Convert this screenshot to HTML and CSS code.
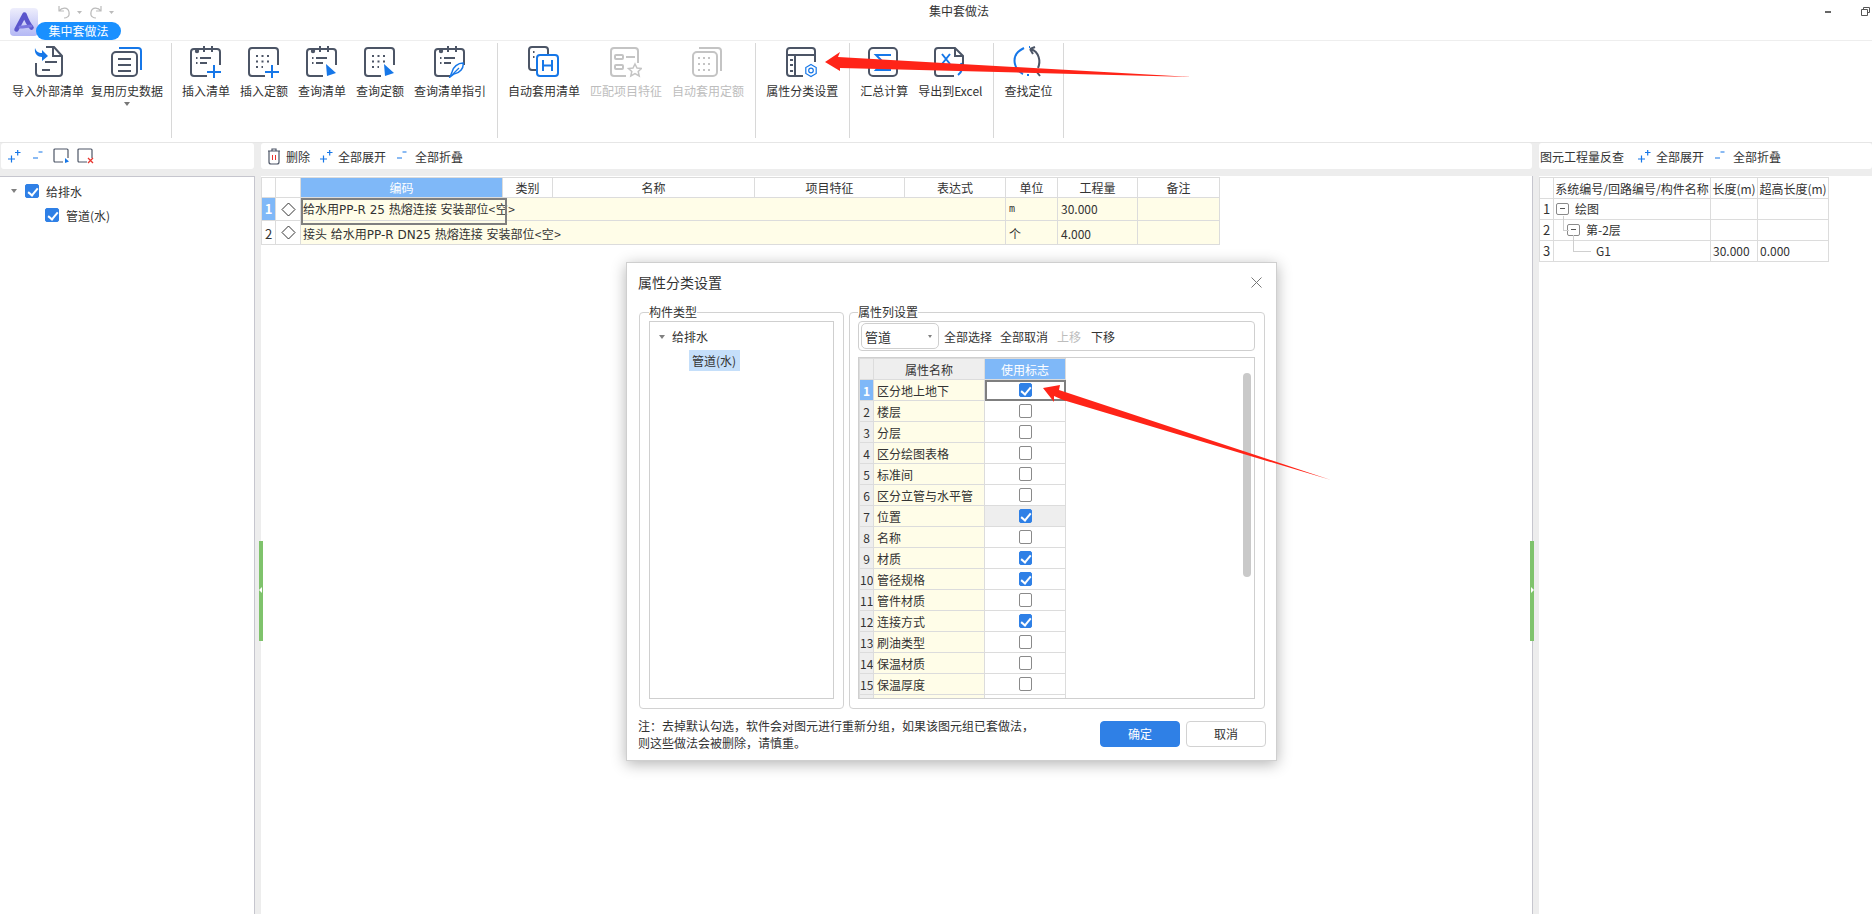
FILE: index.html
```html
<!DOCTYPE html>
<html lang="zh-CN">
<head>
    <meta charset="UTF-8">
    <title>集中套做法</title>
    <link rel="stylesheet" href="styles.css">
</head>
<body>
<svg class="defs" width="0" height="0">
    <defs>
        <g id="cal">
            <path class="ln" d="M17 30H4a3 3 0 0 1-3-3V6a3 3 0 0 1 3-3h23a3 3 0 0 1 3 3v13"/>
            <path class="ln" d="M14 0v6M22 0v6"/>
            <circle cx="7" cy="5" r="2.2" fill="#4c5566"/>
            <path class="ln" d="M6 12h1.5M10 12h11M6 17h1.5M10 17h7"/>
        </g>
        <g id="dots">
            <path class="ln" d="M17 30H4a3 3 0 0 1-3-3V5a3 3 0 0 1 3-3h23a3 3 0 0 1 3 3v14"/>
            <path class="ln" stroke-dasharray="2 3.5" d="M8 10h13M8 15.5h13M8 21h7"/>
        </g>
        <g id="plus">
            <path class="bl" d="M24 19v14M17 26h14"/>
        </g>
        <path id="pick" fill="#1677e8" d="M20 18l10 9-9 3z"/>
        <g id="open">
            <path class="sm-bl" d="M1 11h7M4.5 7.5v7M8 4.500h5.500M10.700 2v5.500"/>
        </g>
        <g id="shut">
            <path class="sm-bl" d="M1 10h5M6.500 4h4"/>
        </g>
    </defs>
</svg>

<header class="titlebar">
    <div class="quick">
        <div class="logo-wrap">
            <svg class="logo" width="28" height="28" viewBox="0 0 28 28">
                <defs>
                    <linearGradient id="lg" x1="0" y1="0" x2="0" y2="1">
                        <stop offset="0" stop-color="#eeeefc"/>
                        <stop offset="1" stop-color="#b4b8f5"/>
                    </linearGradient>
                </defs>
                <rect width="28" height="28" rx="4" fill="url(#lg)"/>
                <path d="M6.500 21.500L14.500 6.500c1.500 4 3.500 9 7 13" fill="none" stroke="#5b56cc" stroke-width="4.500" stroke-linecap="round" stroke-linejoin="round"/>
                <path d="M10 19c4 0 8-1 11-1" fill="none" stroke="#7b77df" stroke-width="3" stroke-linecap="round"/>
            </svg>
            <span class="tab-pill">集中套做法</span>
        </div>
        <svg class="undo" width="62" height="14" viewBox="0 0 62 14">
            <path class="gr" d="M2 1v5h5M2 6c3-4 9-4 10 1s-3 6-5 6"/>
            <path d="M20 6h5l-2.500 3z" fill="#bbb"/>
            <path class="gr" d="M44 1v5h-5M44 6c-3-4-9-4-10 1s3 6 5 6"/>
            <path d="M52 6h5l-2.500 3z" fill="#bbb"/>
        </svg>
    </div>
    <div class="app-title">集中套做法</div>
    <div class="win-btns">
        <span class="win-min"></span>
        <svg width="9" height="9" viewBox="0 0 9 9"><path d="M2.500 2.500V.5h6v5H6.500M.5 2.500h6v6h-6z" fill="none" stroke="#555"/></svg>
    </div>
</header>

<nav class="ribbon">
    <section class="rib-group first">
        <button class="rib-item">
            <svg class="ico" viewBox="0 0 32 32">
                <path class="ln" d="M4 17v10a3 3 0 0 0 3 3h20a3 3 0 0 0 3-3V10l-8-9h-8"/>
                <path class="ln" d="M21 1v9h9M13 16h12M10 24h8"/>
                <path fill="#1677e8" d="M3 2c1 3 3 5 7 5V4l6 6-6 5v-4C6 11 2 8 3 2z"/>
            </svg>
            <span>导入外部清单</span>
        </button>
        <button class="rib-item">
            <svg class="ico" viewBox="0 0 32 32">
                <path class="bl" d="M8 2h19a3 3 0 0 1 3 3v19"/>
                <rect class="ln" x="1" y="6" width="25" height="24" rx="4"/>
                <path class="ln" d="M7 13h13M7 19h13M7 25h13"/>
            </svg>
            <span>复用历史数据</span>
            <i class="caret"></i>
        </button>
    </section>
    <section class="rib-group">
        <button class="rib-item">
            <svg class="ico" viewBox="0 0 32 32"><use href="#cal"/><use href="#plus"/></svg>
            <span>插入清单</span>
        </button>
        <button class="rib-item">
            <svg class="ico" viewBox="0 0 32 32"><use href="#dots"/><use href="#plus"/></svg>
            <span>插入定额</span>
        </button>
        <button class="rib-item">
            <svg class="ico" viewBox="0 0 32 32"><use href="#cal"/><use href="#pick"/></svg>
            <span>查询清单</span>
        </button>
        <button class="rib-item">
            <svg class="ico" viewBox="0 0 32 32"><use href="#dots"/><use href="#pick"/></svg>
            <span>查询定额</span>
        </button>
        <button class="rib-item">
            <svg class="ico" viewBox="0 0 32 32">
                <use href="#cal"/>
                <path fill="#fff" stroke="#1677e8" stroke-width="1.500" d="M29 17c1 5-3 10-9 11l-4 3 2-5c1-5 6-9 11-9z"/>
                <path stroke="#1677e8" stroke-width="1.200" d="M18 29l7-7"/>
            </svg>
            <span>查询清单指引</span>
        </button>
    </section>
    <section class="rib-group">
        <button class="rib-item">
            <svg class="ico" viewBox="0 0 32 32">
                <path class="ln" d="M8 24H4a3 3 0 0 1-3-3V4a3 3 0 0 1 3-3h13a3 3 0 0 1 3 3v4"/>
                <path class="ln" d="M5 6h1.500M5 11h1.500"/>
                <rect class="bl" x="9" y="9" width="21" height="21" rx="3"/>
                <path class="bl" d="M15 14v11M24 14v11M15 19.500h9"/>
            </svg>
            <span>自动套用清单</span>
        </button>
        <button class="rib-item off">
            <svg class="ico" viewBox="0 0 32 32">
                <path class="ln-off" d="M16 30H4a3 3 0 0 1-3-3V5a3 3 0 0 1 3-3h21a3 3 0 0 1 3 3v12"/>
                <rect class="ln-off" x="5" y="9" width="8" height="4" rx="1"/>
                <rect class="ln-off" x="5" y="19" width="8" height="4" rx="1"/>
                <path class="ln-off" d="M16 11h9"/>
                <path class="star" d="M25 18l2 4 4.500.5-3.300 3 1 4.500-4.200-2.300-4.200 2.300 1-4.500-3.300-3 4.500-.5z"/>
            </svg>
            <span>匹配项目特征</span>
        </button>
        <button class="rib-item off">
            <svg class="ico" viewBox="0 0 32 32">
                <path class="ln-off" d="M7 2h19a3 3 0 0 1 3 3v20"/>
                <rect class="ln-off" x="1" y="6" width="24" height="24" rx="4"/>
                <path class="ln-off" stroke-dasharray="2 3" d="M6 12h14M6 18h14M6 24h14"/>
            </svg>
            <span>自动套用定额</span>
        </button>
    </section>
    <section class="rib-group">
        <button class="rib-item">
            <svg class="ico" viewBox="0 0 32 32">
                <path class="ln" d="M17 30H4a3 3 0 0 1-3-3V5a3 3 0 0 1 3-3h22a3 3 0 0 1 3 3v11M1 9h28M9 9v21"/>
                <path class="ln" d="M4 14h3M4 19h3M4 25h3"/>
                <circle class="sm-bl" cx="25" cy="24.500" r="2.300"/>
                <path class="sm-bl" d="M25 18.500l5.200 3v6l-5.200 3-5.200-3v-6z"/>
            </svg>
            <span>属性分类设置</span>
        </button>
    </section>
    <section class="rib-group">
        <button class="rib-item">
            <svg class="ico" viewBox="0 0 32 32">
                <rect class="ln" x="1" y="2" width="28" height="28" rx="4"/>
                <path class="bl" d="M23 9H8l7 7-7 8h15"/>
            </svg>
            <span>汇总计算</span>
        </button>
        <button class="rib-item">
            <svg class="ico" viewBox="0 0 32 32">
                <path class="ln" d="M20 30H4a3 3 0 0 1-3-3V5a3 3 0 0 1 3-3h17l8 8v9M21 2v8h8"/>
                <path class="bl" d="M8 8l8 10M16 8L8 18"/>
                <path class="bl" d="M27 17c2 5 1 9-3 12"/>
            </svg>
            <span>导出到Excel</span>
        </button>
    </section>
    <section class="rib-group">
        <button class="rib-item">
            <svg class="ico" viewBox="0 0 32 32">
                <path class="bl" d="M11 28C2 24 0 12 6 6c2-2 4-3 6-4" fill="none"/>
                <path class="ln" d="M19 3c8 3 10 12 7 19M24 25l4 5M18 3l5-2M18 3l3 5"/>
                <path class="bl" d="M15 29h2M17 1h1"/>
            </svg>
            <span>查找定位</span>
        </button>
    </section>
</nav>

<main class="work">
    <div class="col">
        <div class="tbar left-bar">
            <svg class="sm" viewBox="0 0 18 16"><use href="#open"/></svg>
            <svg class="sm" viewBox="0 0 18 16"><use href="#shut"/></svg>
            <svg class="sm" viewBox="0 0 18 16">
                <path class="sm-ln" d="M10 14H2a1 1 0 0 1-1-1V2a1 1 0 0 1 1-1h12a1 1 0 0 1 1 1v8"/>
                <path fill="#1677e8" d="M12 10l4 3.500-4 1.500z"/>
            </svg>
            <svg class="sm" viewBox="0 0 18 16">
                <path class="sm-ln" d="M10 14H2a1 1 0 0 1-1-1V2a1 1 0 0 1 1-1h12a1 1 0 0 1 1 1v8"/>
                <path d="M11 10l5 5M16 10l-5 5" stroke="#e8352e" stroke-width="1.300" fill="none"/>
            </svg>
        </div>
        <div class="tree-panel">
            <div class="tree-row">
                <i class="tri"></i><span class="cb on big"></span><span>给排水</span>
            </div>
            <div class="tree-row sub">
                <span class="cb on big"></span><span>管道(水)</span>
            </div>
        </div>
    </div>

    <div class="col">
        <div class="tbar mid-bar">
            <svg class="trash" width="14" height="17" viewBox="0 0 14 17">
                <path class="sm-ln" d="M1 3h12M5 3V1h4v2M2 3v11a2 2 0 0 0 2 2h6a2 2 0 0 0 2-2V3"/>
                <path d="M5.500 7v5M8.500 7v5" stroke="#e8352e" fill="none"/>
            </svg>
            <span class="tb-txt del">删除</span>
            <svg class="sm" viewBox="0 0 18 16"><use href="#open"/></svg>
            <span class="tb-txt">全部展开</span>
            <svg class="sm" viewBox="0 0 18 16"><use href="#shut"/></svg>
            <span class="tb-txt">全部折叠</span>
        </div>
        <div class="grid-panel mid-panel">
            <table class="grid main-grid">
                <colgroup>
                    <col class="w14"><col class="w25"><col class="w202"><col class="w50"><col class="w202">
                    <col class="w150"><col class="w101"><col class="w52"><col class="w80"><col class="w82">
                </colgroup>
                <tr class="head">
                    <th></th><th></th><th class="hl">编码</th><th>类别</th><th>名称</th>
                    <th>项目特征</th><th>表达式</th><th>单位</th><th>工程量</th><th>备注</th>
                </tr>
                <tr class="r1">
                    <td class="num hl">1</td>
                    <td class="dia"><svg width="15" height="15" viewBox="0 0 15 15"><path d="M7.500 1l6.500 6.500L7.500 14 1 7.500z" fill="none" stroke="#333"/></svg></td>
                    <td colspan="5" class="cream sel wide">给水用PP-R 25 热熔连接 安装部位<span class="ang">&lt;空&gt;</span></td>
                    <td class="cream unit">m</td><td class="cream">30.000</td><td class="cream"></td>
                </tr>
                <tr class="r2">
                    <td class="num">2</td>
                    <td class="dia"><svg width="15" height="15" viewBox="0 0 15 15"><path d="M7.500 1l6.500 6.500L7.500 14 1 7.500z" fill="none" stroke="#333"/></svg></td>
                    <td colspan="5" class="cream wide">接头 给水用PP-R DN25 热熔连接 安装部位<span class="ang">&lt;空&gt;</span></td>
                    <td class="cream">个</td><td class="cream">4.000</td><td class="cream"></td>
                </tr>
            </table>
        </div>
    </div>

    <div class="col">
        <div class="tbar right-bar">
            <span class="tb-txt">图元工程量反查</span>
            <svg class="sm" viewBox="0 0 18 16"><use href="#open"/></svg>
            <span class="tb-txt">全部展开</span>
            <svg class="sm" viewBox="0 0 18 16"><use href="#shut"/></svg>
            <span class="tb-txt">全部折叠</span>
        </div>
        <div class="grid-panel">
            <table class="grid side-grid">
                <colgroup><col class="w14"><col class="w157"><col class="w47"><col class="w71"></colgroup>
                <tr class="head">
                    <th></th><th>系统编号/回路编号/构件名称</th><th>长度(m)</th><th>超高长度(m)</th>
                </tr>
                <tr><td class="num">1</td><td><span class="tgl"></span><span class="nm">绘图</span></td><td></td><td></td></tr>
                <tr><td class="num">2</td><td class="ind1"><span class="tgl lk"></span><span class="nm">第-2层</span></td><td></td><td></td></tr>
                <tr><td class="num">3</td><td class="ind2"><span class="nm leaf">G1</span></td><td>30.000</td><td>0.000</td></tr>
            </table>
        </div>
    </div>

    <div class="split split-l"></div>
    <div class="split split-r"></div>
</main>

<div class="dialog">
    <div class="dlg-title">
        <span>属性分类设置</span>
        <svg width="11" height="11" viewBox="0 0 11 11"><path d="M.5.5l10 10M10.500.5l-10 10" stroke="#777" fill="none"/></svg>
    </div>
    <div class="dlg-body">
        <fieldset class="fs fs-left">
            <legend>构件类型</legend>
            <div class="type-tree">
                <div class="tt-row"><i class="tri"></i><span>给排水</span></div>
                <div class="tt-sel">管道(水)</div>
            </div>
        </fieldset>
        <fieldset class="fs fs-right">
            <legend>属性列设置</legend>
            <div class="attr-tools">
                <div class="combo"><span>管道</span><i class="tri tiny"></i></div>
                <span class="t1">全部选择</span>
                <span class="t2">全部取消</span>
                <span class="t3">上移</span>
                <span class="t4">下移</span>
            </div>
            <div class="attr-box">
                <table class="grid attr-grid">
                    <colgroup><col class="w14"><col class="w111"><col class="w81"></colgroup>
                    <tr class="head"><th class="gray"></th><th class="gray">属性名称</th><th class="hl">使用标志</th></tr>
                    <tr><td class="num hl">1</td><td class="cream">区分地上地下</td><td class="chk sel-cell"><span class="cb on"></span></td></tr>
                    <tr><td class="num gray">2</td><td class="cream">楼层</td><td class="chk"><span class="cb"></span></td></tr>
                    <tr><td class="num gray">3</td><td class="cream">分层</td><td class="chk"><span class="cb"></span></td></tr>
                    <tr><td class="num gray">4</td><td class="cream">区分绘图表格</td><td class="chk"><span class="cb"></span></td></tr>
                    <tr><td class="num gray">5</td><td class="cream">标准间</td><td class="chk"><span class="cb"></span></td></tr>
                    <tr><td class="num gray">6</td><td class="cream">区分立管与水平管</td><td class="chk"><span class="cb"></span></td></tr>
                    <tr><td class="num gray">7</td><td class="cream">位置</td><td class="chk gray"><span class="cb on"></span></td></tr>
                    <tr><td class="num gray">8</td><td class="cream">名称</td><td class="chk"><span class="cb"></span></td></tr>
                    <tr><td class="num gray">9</td><td class="cream">材质</td><td class="chk"><span class="cb on"></span></td></tr>
                    <tr><td class="num gray">10</td><td class="cream">管径规格</td><td class="chk"><span class="cb on"></span></td></tr>
                    <tr><td class="num gray">11</td><td class="cream">管件材质</td><td class="chk"><span class="cb"></span></td></tr>
                    <tr><td class="num gray">12</td><td class="cream">连接方式</td><td class="chk"><span class="cb on"></span></td></tr>
                    <tr><td class="num gray">13</td><td class="cream">刷油类型</td><td class="chk"><span class="cb"></span></td></tr>
                    <tr><td class="num gray">14</td><td class="cream">保温材质</td><td class="chk"><span class="cb"></span></td></tr>
                    <tr><td class="num gray">15</td><td class="cream">保温厚度</td><td class="chk"><span class="cb"></span></td></tr>
                    <tr><td class="num gray"></td><td class="cream"></td><td class="chk"><span class="cb"></span></td></tr>
                </table>
                <div class="vbar"></div>
            </div>
        </fieldset>
    </div>
    <div class="dlg-foot">
        <p class="note">注：去掉默认勾选，软件会对图元进行重新分组，如果该图元组已套做法，<br>则这些做法会被删除，请慎重。</p>
        <button class="btn primary">确定</button>
        <button class="btn">取消</button>
    </div>
</div>

<!-- 红色标注箭头 -->
<svg class="marks" width="1872" height="914" viewBox="0 0 1872 914">
    <polygon points="825,62 840,52 838,57 1192,77 840,68 840,71"/>
    <polygon points="1043,388 1060,385 1059,390 1331,480 1063,400 1054,396 1054,402"/>
</svg>
</body>
</html>
```

FILE: styles.css
```css
* {
    box-sizing: border-box;
}

body {
    position: relative;
    width: 1872px;
    height: 914px;
    margin: 0;
    overflow: hidden;
    background-color: #fff;
    font-family: "Noto Sans CJK SC", "Noto Sans", sans-serif;
    font-size: 12px;
    color: #333;
}

.defs {
    display: block;
    height: 0;
}

/* 线条 */
.ln, .bl, .ln-off, .gr, .sm-ln, .sm-bl, .star {
    fill: none;
}

.ln {
    stroke: #4c5566;
    stroke-width: 2;
}

.bl {
    stroke: #1677e8;
    stroke-width: 2;
}

.ln-off {
    stroke: #c4c4c4;
    stroke-width: 2;
}

.star {
    stroke: #c4c4c4;
    stroke-width: 1.5;
    fill: #fff;
}

.gr {
    stroke: #bbb;
    stroke-width: 1.2;
}

.sm-ln {
    stroke: #4c5566;
    stroke-width: 1.2;
}

.sm-bl {
    stroke: #1677e8;
    stroke-width: 1.2;
}

/* 标题栏 */
.titlebar {
    display: flex;
    height: 41px;
    border-bottom: 1px solid #eee;
}

.quick {
    display: flex;
    width: 929px;
    padding: 5px 0 0 10px;
}

.logo-wrap {
    position: relative;
    width: 47px;
    height: 36px;
}

.logo {
    display: block;
    margin-top: 3px;
}

.tab-pill {
    position: absolute;
    top: 17px;
    left: 26px;
    width: 85px;
    height: 18px;
    border-radius: 9px;
    background-color: #1a90ff;
    line-height: 18px;
    text-align: center;
    color: #fff;
}

.undo {
    display: block;
}

.app-title {
    width: 60px;
    line-height: 22px;
}

.win-btns {
    display: flex;
    align-items: flex-start;
    margin-left: auto;
    padding: 7px 2px 0 0;
    gap: 30px;
}

.win-min {
    width: 6px;
    height: 2px;
    margin-top: 4px;
    background-color: #666;
}

/* 功能区 */
.ribbon {
    display: flex;
    height: 102px;
    padding-top: 2px;
    border-bottom: 1px solid #e6e6e6;
}

.rib-group {
    display: flex;
    height: 95px;
    padding: 0 11px 0 10px;
    gap: 10px;
    border-right: 1px solid #d8d8d8;
}

.rib-group.first {
    width: 172px;
    padding-left: 12px;
    gap: 7px;
}

.rib-item {
    display: flex;
    flex-direction: column;
    align-items: center;
    padding: 0;
    border: 0;
    background: none;
    font: inherit;
    color: #333;
}

.rib-item .ico {
    display: block;
    width: 32px;
    height: 32px;
    margin: 3px 0 5px;
}

.rib-item span {
    line-height: 16px;
    white-space: nowrap;
}

.rib-item.off span {
    color: #bdbdbd;
}

.caret {
    width: 0;
    height: 0;
    margin-top: 3px;
    border: 3px solid transparent;
    border-top: 4px solid #777;
    border-bottom: 0;
}

/* 工作区 */
.work {
    position: relative;
    display: grid;
    grid-template-columns: 255px 1272px 1fr;
    column-gap: 6px;
    height: 771px;
    background-color: #ededed;
}

.col {
    display: flex;
    flex-direction: column;
    min-height: 0;
    gap: 7px;
}

.tbar {
    display: flex;
    align-items: center;
    height: 26px;
    flex: none;
    border-radius: 3px;
    background-color: #fff;
}

.left-bar {
    width: 253px;
    margin-left: 1px;
    padding-left: 6px;
}

.left-bar .sm:nth-child(2) {
    margin-left: 7px;
}

.left-bar .sm:nth-child(3) {
    margin-left: 3px;
}

.left-bar .sm:nth-child(4) {
    margin-left: 6px;
}

.mid-bar {
    width: 1271px;
    padding-left: 6px;
}

.right-bar {
    padding-left: 1px;
}

.sm {
    display: block;
    width: 18px;
    height: 16px;
}

.tb-txt {
    margin-left: 1px;
    margin-right: 10px;
    white-space: nowrap;
}

.tb-txt.del {
    margin-left: 5px;
    margin-right: 9px;
}

.right-bar .tb-txt:first-child {
    margin-left: 0;
    margin-right: 13px;
}

.tree-panel {
    flex: 1;
    padding-top: 2px;
    border-top: 1px solid #c6c6ce;
    border-right: 1px solid #c6c6ce;
    background-color: #fff;
}

.tree-row {
    display: flex;
    align-items: center;
    height: 24px;
    padding-left: 11px;
}

.tree-row.sub {
    padding-left: 45px;
}

.tree-row .cb {
    margin-right: 7px;
}

.tree-row .tri {
    margin-right: 8px;
}

.tri {
    display: block;
    width: 0;
    height: 0;
    border: 3px solid transparent;
    border-top: 4px solid #808080;
    border-bottom: 0;
}

.grid-panel {
    flex: 1;
    padding-top: 1px;
    background-color: #fff;
}

.mid-panel {
    border-right: 1px solid #c6c6ce;
}

/* 表格 */
.grid {
    table-layout: fixed;
    border-collapse: collapse;
    border-spacing: 0;
}

.grid th, .grid td {
    height: 21px;
    padding: 0;
    border: 1px solid #dcdcdc;
    font-weight: normal;
    white-space: nowrap;
    overflow: hidden;
}

.grid th {
    text-align: center;
}

.main-grid {
    width: 958px;
}

.main-grid .head th {
    height: 20px;
}

.main-grid .r1 td {
    height: 23px;
    padding-bottom: 1px;
}

.main-grid .r2 td {
    height: 24px;
    padding-top: 1px;
}

.main-grid td {
    padding-left: 3px;
}

.main-grid td.wide {
    padding-left: 2px;
    font-family: "DejaVu Sans", "Noto Sans CJK SC", sans-serif;
}

.main-grid td.num, .side-grid td.num {
    padding-left: 0;
    text-align: center;
    font-size: 13px;
}

.attr-grid td.num {
    text-align: center;
}

.attr-grid td.cream {
    padding-left: 3px;
}

.main-grid td.dia {
    padding: 3px 0 0;
    text-align: center;
}

.ang {
    font-family: "Noto Sans CJK SC", sans-serif;
    letter-spacing: 0.5px;
}

.main-grid td.cream.unit {
    font-family: "DejaVu Sans Mono", monospace;
    font-size: 10px;
}

.w14 { width: 14px; }
.w25 { width: 25px; }
.w47 { width: 47px; }
.w50 { width: 50px; }
.w52 { width: 52px; }
.w71 { width: 71px; }
.w80 { width: 80px; }
.w81 { width: 81px; }
.w82 { width: 82px; }
.w101 { width: 101px; }
.w111 { width: 111px; }
.w150 { width: 150px; }
.w157 { width: 157px; }
.w202 { width: 202px; }

.grid .hl {
    background-color: #7fb8f8;
    color: #fff;
}

.grid .num.hl {
    font-weight: bold;
}

.grid .cream {
    background-color: #fffde8;
}

.grid .gray {
    background-color: #eeeeee;
}

.sel {
    position: relative;
}

.sel::after {
    position: absolute;
    top: 0;
    left: 0;
    width: 202px;
    height: 23px;
    border: 2px solid #7f7f7f;
    content: "";
}

.main-grid tr.r1 td.sel {
    overflow: visible;
}

.side-grid {
    width: 290px;
}

.side-grid td {
    padding-left: 2px;
    padding-bottom: 2px;
    overflow: visible;
}

.side-grid td.num {
    padding-bottom: 1px;
}

.tgl {
    position: relative;
    display: inline-block;
    width: 13px;
    height: 12px;
    margin-right: 6px;
    border: 1px solid #8a8a8a;
    border-radius: 2px;
    vertical-align: -1px;
    background-color: #fff;
}

.tgl::after {
    position: absolute;
    top: 4px;
    left: 3px;
    width: 5px;
    height: 1px;
    background-color: #555;
    content: "";
}

.tgl.lk::before {
    position: absolute;
    top: -9px;
    left: -5px;
    width: 5px;
    height: 14px;
    border-left: 1px solid #cfcfcf;
    border-bottom: 1px solid #cfcfcf;
    content: "";
}

.ind1 {
    padding-left: 13px !important;
}

.ind2 {
    padding-left: 42px !important;
}

.leaf {
    position: relative;
    display: inline-block;
}

.leaf::before {
    position: absolute;
    top: -7px;
    left: -23px;
    width: 17px;
    height: 16px;
    border-left: 1px solid #cfcfcf;
    border-bottom: 1px solid #cfcfcf;
    content: "";
}

/* 勾选框 */
.cb {
    position: relative;
    display: inline-block;
    width: 13px;
    height: 14px;
    flex: none;
    border: 1px solid #8a8a8a;
    border-radius: 2px;
    vertical-align: middle;
    background-color: #fff;
}

.cb.on {
    border-color: #2f80e6;
    background-color: #2f80e6;
}

.cb.big {
    width: 14px;
    height: 14px;
}

.cb.on::after {
    position: absolute;
    top: 1px;
    left: 3.5px;
    width: 4px;
    height: 8px;
    border: solid #fff;
    border-width: 0 2px 2px 0;
    transform: rotate(40deg);
    content: "";
}

/* 分隔条 */
.split {
    position: absolute;
    top: 398px;
    width: 4px;
    height: 100px;
    background-color: #7fc36c;
}

.split::after {
    position: absolute;
    top: 46px;
    width: 3px;
    height: 6px;
    background-color: #fff;
    content: "";
}

.split-l {
    left: 259px;
}

.split-l::after {
    left: 0;
    clip-path: polygon(100% 0, 0 50%, 100% 100%);
}

.split-r {
    left: 1530px;
}

.split-r::after {
    right: 0;
    clip-path: polygon(0 0, 100% 50%, 0 100%);
}

/* 对话框 */
.dialog {
    position: absolute;
    top: 262px;
    left: 626px;
    width: 651px;
    height: 499px;
    padding: 0 10px 0 12px;
    border: 1px solid #cfcfcf;
    background-color: #fff;
    box-shadow: 0 3px 14px rgba(0, 0, 0, 0.3);
}

.dlg-title {
    display: flex;
    align-items: center;
    justify-content: space-between;
    height: 41px;
    margin-left: -1px;
    padding: 0 2px 3px 0;
    font-size: 14px;
}

.dlg-title svg {
    margin-right: 2px;
}

.dlg-body {
    display: flex;
    height: 405px;
    gap: 5px;
}

.fs {
    display: flex;
    flex-direction: column;
    min-width: 0;
    height: 405px;
    margin: 0;
    padding: 1px 9px 9px;
    border: 1px solid #d2d2d2;
    border-radius: 4px;
}

.fs legend {
    padding: 0;
    line-height: 16px;
}

.fs-left {
    width: 205px;
}

.fs-right {
    width: 416px;
    padding-left: 8px;
}

.type-tree {
    flex: 1;
    padding: 4px 0 0 9px;
    border: 1px solid #cfcfcf;
}

.tt-row {
    display: flex;
    align-items: center;
    height: 21px;
    gap: 7px;
}

.tt-sel {
    width: 51px;
    height: 21px;
    margin: 3px 0 0 30px;
    padding-left: 3px;
    background-color: #c5dffa;
    line-height: 21px;
}

.attr-tools {
    display: flex;
    align-items: center;
    height: 30px;
    flex: none;
    padding-left: 2px;
    border: 1px solid #cfcfcf;
    border-radius: 4px;
}

.t1 {
    margin-left: 5px;
}

.t2 {
    margin-left: 8px;
}

.t3 {
    margin-left: 9px;
    color: #bdbdbd;
}

.t4 {
    margin-left: 10px;
}

.combo {
    display: flex;
    align-items: center;
    justify-content: space-between;
    width: 78px;
    height: 26px;
    padding: 0 6px 0 3px;
    border: 1px solid #cfcfcf;
    border-radius: 5px;
    font-size: 13px;
}

.tiny {
    border-width: 3px 2.5px 0;
}

.attr-box {
    position: relative;
    height: 342px;
    margin-top: 6px;
    overflow: hidden;
    border: 1px solid #cfcfcf;
}

.attr-grid {
    width: 206px;
}

.grid td.chk {
    text-align: center;
    vertical-align: top;
}

.chk .cb {
    margin-top: 3px;
    vertical-align: top;
}

.sel-cell {
    position: relative;
    outline: 2px solid #7f7f7f;
    outline-offset: -2px;
}

.vbar {
    position: absolute;
    top: 15px;
    right: 3px;
    width: 8px;
    height: 204px;
    border-radius: 4px;
    background-color: #c9c9c9;
}

.dlg-foot {
    display: flex;
    align-items: center;
    height: 50px;
    padding-bottom: 1px;
}

.note {
    width: 462px;
    margin: 0 0 0 -1px;
    line-height: 17px;
}

.btn {
    width: 80px;
    height: 26px;
    margin-right: 6px;
    padding: 0;
    border: 1px solid #d2d2d2;
    border-radius: 4px;
    background-color: #fff;
    font: inherit;
    color: #333;
}

.btn:last-child {
    margin-right: 0;
}

.btn.primary {
    border-color: #2f80e6;
    background-color: #2f80e6;
    color: #fff;
}

/* 标注 */
.marks {
    position: absolute;
    top: 0;
    left: 0;
    pointer-events: none;
}

.marks polygon {
    fill: #ff2418;
}
```
